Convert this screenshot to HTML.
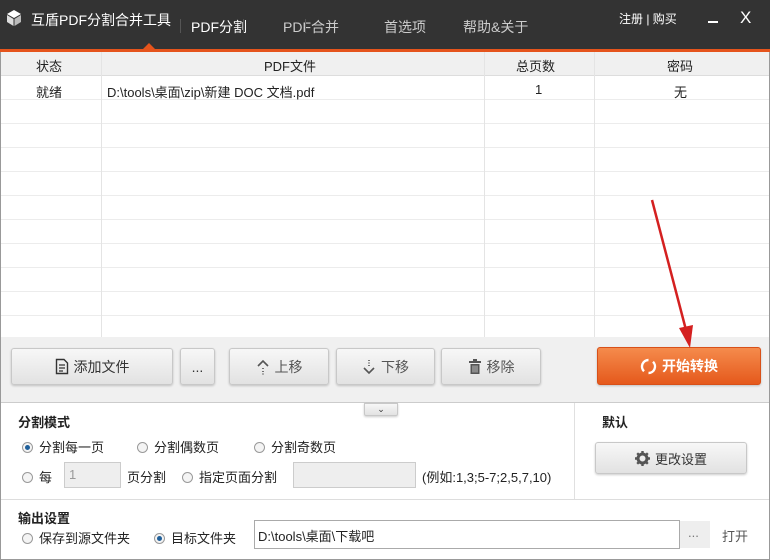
<!DOCTYPE html><html><head><meta charset="utf-8"><style>
*{margin:0;padding:0;box-sizing:border-box}
html,body{width:770px;height:560px;overflow:hidden}
body{font-family:"Liberation Sans","Noto Sans CJK SC",sans-serif;font-size:13px;color:#222;background:#fff;position:relative}
.a{position:absolute;white-space:nowrap}
.btn{position:absolute;background:linear-gradient(#f7f7f7,#e2e2e2);border:1px solid #c8c8c8;border-radius:3px;box-shadow:0 1px 2px rgba(0,0,0,.2);display:flex;align-items:center;justify-content:center;font-size:14px;color:#333}
.btn svg{margin-right:5px}
.rad{display:inline-block;width:11px;height:11px;border:1px solid #999;border-radius:50%;background:#f4f4f4;vertical-align:-1px;margin-right:6px;position:relative}
.rad.on::after{content:"";position:absolute;left:2px;top:2px;width:5px;height:5px;border-radius:50%;background:#1f5f9a}
.row{position:absolute;left:1px;width:768px;height:24px;border-bottom:1px solid #ececec}
</style></head><body>
<div class="a" style="left:0;top:0;width:770px;height:50px;background:#333"></div>
<div class="a" style="left:0;top:49px;width:770px;height:3px;background:#e5541c"></div>
<div class="a" style="left:143px;top:43px;width:0;height:0;border-left:6px solid transparent;border-right:6px solid transparent;border-bottom:6px solid #e5541c"></div>
<svg class="a" style="left:6px;top:9px" width="16" height="18" viewBox="0 0 16 18"><path d="M8 1L15 5 8 9 1 5Z" fill="#fff"/><path d="M1 6L7.5 10V17L1 13Z" fill="#ddd"/><path d="M15 6L8.5 10V17L15 13Z" fill="#bbb"/></svg>
<div class="a" style="left:31px;top:10px;color:#fff;font-size:14px">互盾PDF分割合并工具</div>
<div class="a" style="left:191px;top:17px;color:#fff;font-size:14px">PDF分割</div>
<div class="a" style="left:283px;top:17px;color:#ccc;font-size:14px">PDF合并</div>
<div class="a" style="left:384px;top:17px;color:#ccc;font-size:14px">首选项</div>
<div class="a" style="left:463px;top:17px;color:#ccc;font-size:14px">帮助&amp;关于</div>
<div class="a" style="left:180px;top:19px;width:1px;height:14px;background:#555"></div>
<div class="a" style="left:243px;top:19px;width:1px;height:14px;background:#555"></div>
<div class="a" style="left:305px;top:19px;width:1px;height:14px;background:#555"></div>
<div class="a" style="left:619px;top:10px;color:#fff;font-size:12px">注册 | 购买</div>
<div class="a" style="left:708px;top:21px;width:10px;height:2px;background:#fff"></div>
<div class="a" style="left:740px;top:8px;color:#fff;font-size:17px">X</div>
<div class="a" style="left:0;top:52px;width:770px;height:508px;border:1px solid #999;border-top:none"></div>
<div class="a" style="left:1px;top:52px;width:768px;height:24px;background:#f0f0f0;border-bottom:1px solid #ddd"></div>
<div class="a" style="left:36px;top:56px">状态</div>
<div class="a" style="left:264px;top:56px">PDF文件</div>
<div class="a" style="left:516px;top:56px">总页数</div>
<div class="a" style="left:667px;top:56px">密码</div>
<div class="row" style="top:76px"></div><div class="row" style="top:100px"></div><div class="row" style="top:124px"></div><div class="row" style="top:148px"></div><div class="row" style="top:172px"></div><div class="row" style="top:196px"></div><div class="row" style="top:220px"></div><div class="row" style="top:244px"></div><div class="row" style="top:268px"></div><div class="row" style="top:292px"></div><div class="row" style="top:316px"></div>
<div class="a" style="left:101px;top:52px;width:1px;height:285px;background:#e4e4e4"></div>
<div class="a" style="left:484px;top:52px;width:1px;height:285px;background:#e4e4e4"></div>
<div class="a" style="left:594px;top:52px;width:1px;height:285px;background:#e4e4e4"></div>
<div class="a" style="left:36px;top:82px">就绪</div>
<div class="a" style="left:107px;top:82px">D:\tools\桌面\zip\新建 DOC 文档.pdf</div>
<div class="a" style="left:535px;top:82px">1</div>
<div class="a" style="left:674px;top:82px">无</div>
<div class="a" style="left:1px;top:337px;width:768px;height:66px;background:#f0f0f0;border-bottom:1px solid #ccc"></div>
<div class="btn" style="left:11px;top:348px;width:162px;height:37px"><svg width="14" height="17" viewBox="0 0 14 17"><path d="M1.5 1.5H9L12.5 5V15.5H1.5Z" fill="none" stroke="#333" stroke-width="1.4"/><path d="M4 7H10M4 10H10M4 13H8" stroke="#333" stroke-width="1.2"/></svg>添加文件</div>
<div class="btn" style="left:180px;top:348px;width:35px;height:37px">...</div>
<div class="btn" style="left:229px;top:348px;width:100px;height:37px;color:#555"><svg width="14" height="16" viewBox="0 0 14 16"><path d="M2 7L7 2 12 7" fill="none" stroke="#555" stroke-width="1.6"/><path d="M7 9V10M7 12V13M7 14.5V15.5" stroke="#555" stroke-width="1.6"/></svg>上移</div>
<div class="btn" style="left:336px;top:348px;width:99px;height:37px;color:#555"><svg width="14" height="16" viewBox="0 0 14 16"><path d="M7 1V2M7 3.5V4.5M7 6V7" stroke="#555" stroke-width="1.6"/><path d="M2 9L7 14 12 9" fill="none" stroke="#555" stroke-width="1.6"/></svg>下移</div>
<div class="btn" style="left:441px;top:348px;width:100px;height:37px;color:#555"><svg width="14" height="16" viewBox="0 0 14 16"><rect x="1" y="2" width="12" height="2" fill="#555"/><rect x="5" y="0" width="4" height="2" fill="#555"/><path d="M2.5 5H11.5V15H2.5Z" fill="#555"/><path d="M5 6.5V13.5M7 6.5V13.5M9 6.5V13.5" stroke="#ddd" stroke-width="0.8"/></svg>移除</div>
<div class="btn" style="left:597px;top:347px;width:164px;height:38px;background:linear-gradient(#f58b4c,#e5591c);border-color:#d85018;color:#fff;font-weight:bold"><svg width="17" height="17" viewBox="0 0 17 17"><path d="M8.5 2A6.5 6.5 0 0 0 4 13.2" fill="none" stroke="#fff" stroke-width="2.4"/><path d="M8.5 15A6.5 6.5 0 0 0 13 3.8" fill="none" stroke="#fff" stroke-width="2.4"/></svg>开始转换</div>
<div class="btn" style="left:364px;top:403px;width:34px;height:13px;font-size:9px;border-radius:0 0 2px 2px">⌄</div>
<div class="a" style="left:574px;top:403px;width:1px;height:96px;background:#e0e0e0"></div>
<div class="a" style="left:18px;top:412px;font-weight:bold">分割模式</div>
<div class="a" style="left:22px;top:437px"><span class="rad on"></span>分割每一页</div>
<div class="a" style="left:137px;top:437px"><span class="rad"></span>分割偶数页</div>
<div class="a" style="left:254px;top:437px"><span class="rad"></span>分割奇数页</div>
<div class="a" style="left:22px;top:467px"><span class="rad"></span>每</div>
<div class="a" style="left:64px;top:462px;width:57px;height:26px;background:#eee;border:1px solid #ccc;color:#999;padding:4px 4px">1</div>
<div class="a" style="left:127px;top:467px">页分割</div>
<div class="a" style="left:182px;top:467px"><span class="rad"></span>指定页面分割</div>
<div class="a" style="left:293px;top:462px;width:123px;height:26px;background:#eee;border:1px solid #ccc"></div>
<div class="a" style="left:422px;top:467px">(例如:1,3;5-7;2,5,7,10)</div>
<div class="a" style="left:602px;top:412px;font-weight:bold">默认</div>
<div class="btn" style="left:595px;top:442px;width:152px;height:32px;font-size:13px"><svg width="15" height="15" viewBox="0 0 15 15"><circle cx="7.5" cy="7.5" r="4.5" fill="none" stroke="#555" stroke-width="3"/><path d="M7.5 0V3M7.5 12V15M0 7.5H3M12 7.5H15M2.2 2.2L4.3 4.3M10.7 10.7L12.8 12.8M2.2 12.8L4.3 10.7M10.7 4.3L12.8 2.2" stroke="#555" stroke-width="2.4"/></svg>更改设置</div>
<div class="a" style="left:1px;top:499px;width:768px;height:1px;background:#ddd"></div>
<div class="a" style="left:18px;top:508px;font-weight:bold">输出设置</div>
<div class="a" style="left:22px;top:528px"><span class="rad"></span>保存到源文件夹</div>
<div class="a" style="left:154px;top:528px"><span class="rad on"></span>目标文件夹</div>
<div class="a" style="left:254px;top:520px;width:426px;height:29px;border:1px solid #aaa;padding:5px 3px">D:\tools\桌面\下载吧</div>
<div class="a" style="left:680px;top:521px;width:30px;height:27px;background:#eee;color:#777;padding:4px 8px">...</div>
<div class="a" style="left:722px;top:526px;color:#555">打开</div>
<svg class="a" style="left:0;top:0" width="770" height="560"><line x1="652" y1="200" x2="686" y2="330" stroke="#d42020" stroke-width="2.5"/><path d="M679 328L690 348 693 325Z" fill="#d42020"/></svg>
</body></html>
